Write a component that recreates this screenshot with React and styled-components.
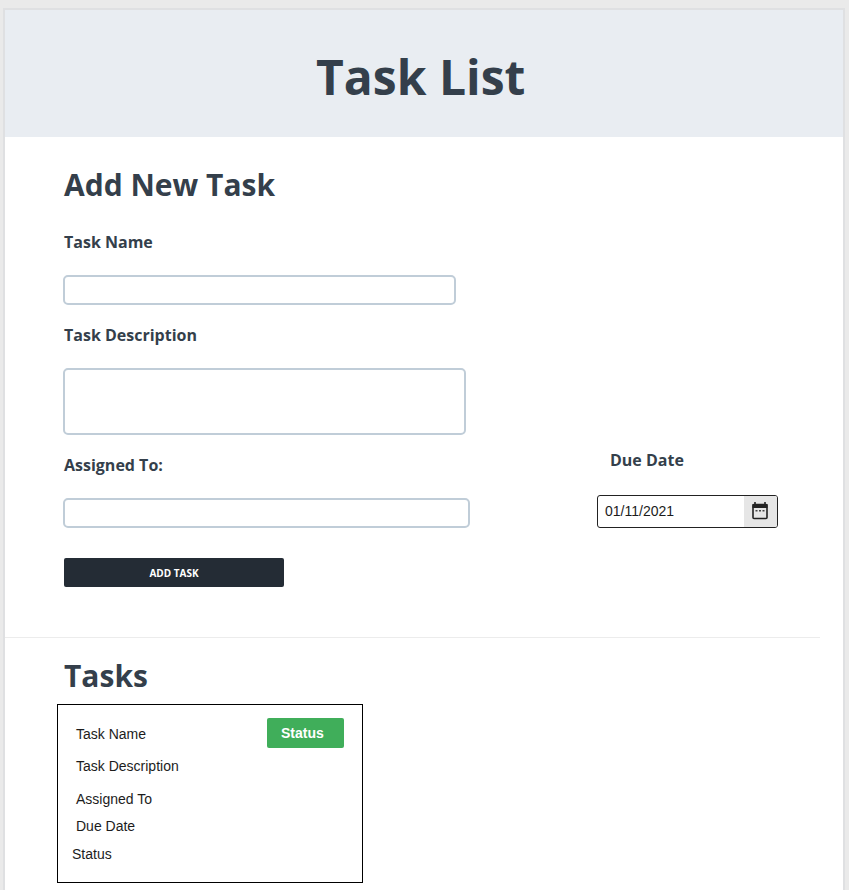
import React from "react";
import styled, { createGlobalStyle } from "styled-components";

const Global = createGlobalStyle`
  *, *::before, *::after { box-sizing: border-box; }
  html, body { margin: 0; height: 100%; background: #eaeaea; overflow: hidden; }
  h1, h2, p { margin: 0; }
`;

const heading = `"Open Sans", sans-serif`;
const body = `"Liberation Sans", Arial, sans-serif`;

const Page = styled.div`
  height: 890px;
  padding: 8px 4px 0 3px;
  overflow: hidden;
`;

const Sheet = styled.main`
  height: 900px;
  border: 2px solid #dfe0e2;
  background: #fff;
`;

const Header = styled.header`
  height: 127px;
  display: flex;
  align-items: center;
  padding: 6px 0 0 311px;
  background: #e9edf2;
`;

const Title = styled.h1`
  font: 700 48px/64px ${heading};
  color: #343f4b;
  white-space: nowrap;
`;

const SectionTitle = styled.h2`
  font: 700 30px/40px ${heading};
  color: #343f4b;
  white-space: nowrap;
`;

const Form = styled.form`
  height: 500px;
  padding: 28px 0 0 59px;
`;

const Columns = styled.div`
  display: flex;
  align-items: flex-end;
  margin-top: 25px;
`;

const Fields = styled.div`
  display: flex;
  flex-direction: column;
  gap: 18px;
  width: 533px;
`;

const Field = styled.div`
  display: flex;
  flex-direction: column;
  gap: ${({ $gap }) => $gap || 21}px;
`;

const Label = styled.label`
  font: 700 16px/24px ${heading};
  color: #343f4b;
  margin-left: ${({ $indent }) => $indent || 0}px;
`;

const TextBox = styled.input`
  width: ${({ $width }) => $width}px;
  height: ${({ $height }) => $height || 30}px;
  margin: 0 0 0 -1px;
  padding: 0 8px;
  border: 2px solid #c0cdd8;
  border-radius: 5px;
  background: #fff;
  outline: 0;
  resize: none;
  font: 14px ${body};
`;

const DateBox = styled.div`
  display: flex;
  width: 181px;
  height: 33px;
  border: 1px solid #222;
  border-radius: 3px;
  overflow: hidden;
`;

const DateValue = styled.span`
  flex: 1;
  padding-left: 7px;
  font: 14px/30px ${body};
  color: #1c1c1c;
`;

const DateButton = styled.span`
  width: 33px;
  display: flex;
  align-items: center;
  justify-content: center;
  padding: 0 2px 1px 0;
  background: #e6e6e6;
`;

const AddButton = styled.button`
  display: block;
  width: 220px;
  height: 29px;
  margin: 30px 0 0;
  padding: 1px 0 0;
  border: 0;
  border-radius: 2px;
  background: #242c35;
  color: #fff;
  font: 700 10px/14px ${heading};
`;

const Divider = styled.hr`
  width: 815px;
  height: 1px;
  margin: 0;
  border: 0;
  background: #ececec;
`;

const Tasks = styled.section`
  padding: 18px 0 0 59px;
`;

const Card = styled.article`
  display: flex;
  justify-content: space-between;
  width: 306px;
  height: 179px;
  margin: 8px 0 0 -7px;
  padding: 13px 18px 0 14px;
  border: 1px solid #000;
`;

const Details = styled.div`
  padding-top: 6px;
`;

const Detail = styled.p`
  height: ${({ $height }) => $height}px;
  padding-left: ${({ $indent }) => $indent}px;
  font: 14px/20px ${body};
  color: #1c1c1c;
`;

const Badge = styled.span`
  width: 77px;
  height: 30px;
  padding-left: 14px;
  border-radius: 2px;
  background: #40ae5a;
  color: #fff;
  font: 700 14px/30px ${body};
`;

const CalendarIcon = () => (
  <svg width="18" height="20" viewBox="0 0 18 20" fill="none">
    <path d="M4 1v3M14 1v3" stroke="#222" strokeWidth="1.6" />
    <rect x="2" y="3.5" width="14" height="14" rx="1" stroke="#222" strokeWidth="1.6" />
    <path d="M1.5 3h15v4h-15z" fill="#222" />
    <path d="M4.5 9.8h2M8 9.8h2M11.5 9.8h2" stroke="#444" strokeWidth="1.5" />
  </svg>
);

const details = [
  { text: "Task Name", height: 32, indent: 4 },
  { text: "Task Description", height: 33, indent: 4 },
  { text: "Assigned To", height: 27, indent: 4 },
  { text: "Due Date", height: 28, indent: 4 },
  { text: "Status", height: 20, indent: 0 },
];

export default function App() {
  return (
    <Page>
      <Global />
      <Sheet>
        <Header>
          <Title>Task List</Title>
        </Header>
        <Form>
          <SectionTitle>Add New Task</SectionTitle>
          <Columns>
            <Fields>
              <Field>
                <Label htmlFor="name">Task Name</Label>
                <TextBox id="name" $width={393} />
              </Field>
              <Field>
                <Label htmlFor="description">Task Description</Label>
                <TextBox as="textarea" id="description" $width={403} $height={67} />
              </Field>
              <Field>
                <Label htmlFor="assignee">Assigned To:</Label>
                <TextBox id="assignee" $width={407} />
              </Field>
            </Fields>
            <Field $gap={23}>
              <Label as="span" $indent={13}>Due Date</Label>
              <DateBox>
                <DateValue>01/11/2021</DateValue>
                <DateButton>
                  <CalendarIcon />
                </DateButton>
              </DateBox>
            </Field>
          </Columns>
          <AddButton type="button">ADD TASK</AddButton>
        </Form>
        <Divider />
        <Tasks>
          <SectionTitle>Tasks</SectionTitle>
          <Card>
            <Details>
              {details.map(({ text, height, indent }) => (
                <Detail key={text} $height={height} $indent={indent}>{text}</Detail>
              ))}
            </Details>
            <Badge>Status</Badge>
          </Card>
        </Tasks>
      </Sheet>
    </Page>
  );
}
